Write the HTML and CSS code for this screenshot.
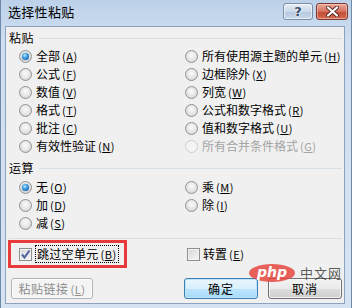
FILE: index.html
```html
<!DOCTYPE html>
<html lang="zh-CN">
<head>
  <meta charset="UTF-8" />
  <title>选择性粘贴</title>
  <link rel="stylesheet" href="styles.css">
</head>
<body>

  <div class="window">
    <div class="titlebar">
      <span class="title">选择性粘贴</span>
      <div class="caption">
        <button class="cap help">?</button>
        <button class="cap close">
          <svg width="13" height="11" viewBox="0 0 13 11">
            <path d="M2 1.5 L11 9.5 M11 1.5 L2 9.5" stroke="#5a2a22" stroke-width="4" stroke-linecap="round"/>
            <path d="M2 1.5 L11 9.5 M11 1.5 L2 9.5" stroke="#fff" stroke-width="2.2" stroke-linecap="round"/>
          </svg>
        </button>
      </div>
    </div>

    <div class="client">
      <div class="group-head">粘贴</div>
      <div class="options">
        <label class="opt"><i class="radio checked"></i>全部<span class="key">(<u>A</u>)</span></label>
        <label class="opt"><i class="radio"></i>所有使用源主题的单元<span class="key">(<u>H</u>)</span></label>
        <label class="opt"><i class="radio"></i>公式<span class="key">(<u>F</u>)</span></label>
        <label class="opt"><i class="radio"></i>边框除外<span class="key">(<u>X</u>)</span></label>
        <label class="opt"><i class="radio"></i>数值<span class="key">(<u>V</u>)</span></label>
        <label class="opt"><i class="radio"></i>列宽<span class="key">(<u>W</u>)</span></label>
        <label class="opt"><i class="radio"></i>格式<span class="key">(<u>T</u>)</span></label>
        <label class="opt"><i class="radio"></i>公式和数字格式<span class="key">(<u>R</u>)</span></label>
        <label class="opt"><i class="radio"></i>批注<span class="key">(<u>C</u>)</span></label>
        <label class="opt"><i class="radio"></i>值和数字格式<span class="key">(<u>U</u>)</span></label>
        <label class="opt"><i class="radio"></i>有效性验证<span class="key">(<u>N</u>)</span></label>
        <label class="opt disabled"><i class="radio"></i>所有合并条件格式<span class="key">(<u>G</u>)</span></label>
      </div>

      <div class="group-head op-head">运算</div>
      <div class="options op-options">
        <label class="opt"><i class="radio checked"></i>无<span class="key">(<u>O</u>)</span></label>
        <label class="opt"><i class="radio"></i>乘<span class="key">(<u>M</u>)</span></label>
        <label class="opt"><i class="radio"></i>加<span class="key">(<u>D</u>)</span></label>
        <label class="opt"><i class="radio"></i>除<span class="key">(<u>I</u>)</span></label>
        <label class="opt"><i class="radio"></i>减<span class="key">(<u>S</u>)</span></label>
      </div>

      <div class="sep"></div>

      <div class="checks">
        <div class="highlight">
          <label class="opt">
            <i class="check checked">
              <svg width="11" height="11" viewBox="0 0 11 11">
                <path d="M2 5.5 L4.5 8.5 L9.5 1.5" fill="none" stroke="#4f63a0" stroke-width="2"/>
              </svg>
            </i>
            <span class="focus">跳过空单元<span class="key">(<u>B</u>)</span></span>
          </label>
        </div>
        <label class="opt transpose"><i class="check"></i>转置<span class="key">(<u>E</u>)</span></label>
      </div>

      <div class="buttons">
        <button class="btn" disabled>粘贴链接<span class="key">(<u>L</u>)</span></button>
        <button class="btn default">确定</button>
        <button class="btn">取消</button>
      </div>
    </div>

    <div class="watermark">
      <span class="php">php</span>
      <span class="cn">中文网</span>
    </div>
  </div>

</body>
</html>
```

FILE: styles.css
```css
body {
  margin: 0;
  font-family: "Noto Sans CJK SC", "DejaVu Sans", sans-serif;
  font-size: 12px;
  color: #000;
  background: #d0dff0;
}
.window {
  position: relative;
  width: 352px;
  height: 308px;
  box-sizing: border-box;
  padding: 0 6px 4px 4px;
  background: linear-gradient(#bcd1e9, #cfdef0 40px, #d6e3f2);
  border-left: 1px solid #6f89a8;
  border-right: 1px solid #6f89a8;
  display: flex;
  flex-direction: column;
}
.titlebar {
  height: 26px;
  display: flex;
  align-items: flex-start;
  justify-content: space-between;
  margin-left: -1px;
}
.title {
  font-size: 13px;
  line-height: 24px;
  padding-left: 4px;
  letter-spacing: 0.3px;
}
.caption {
  display: flex;
  gap: 3px;
  padding-top: 3px;
  margin-right: -3px;
}
.cap {
  height: 17px;
  padding: 0;
  border-radius: 3px;
  display: flex;
  align-items: center;
  justify-content: center;
  box-sizing: border-box;
}
.help {
  width: 30px;
  border: 1px solid #7b8ea6;
  background: linear-gradient(#e7eef7, #c9d8ea 50%, #b4c8e0 51%, #c8d9ec);
  box-shadow: inset 0 0 0 1px rgba(255, 255, 255, 0.6);
  font: bold 13px "DejaVu Sans", sans-serif;
  color: #394c66;
  text-shadow: 0 0 2px #fff, 0 0 1px #fff;
}
.close {
  width: 32px;
  border: 1px solid #7b3a2f;
  background: linear-gradient(#e9a99c, #d5715f 50%, #c24a35 51%, #d36c51);
  box-shadow: inset 0 0 0 1px rgba(255, 220, 210, 0.5);
}
.client {
  flex: 1;
  background: #f0f0f0;
  border: 1px solid #8da2bd;
  padding: 0 1px 0 0;
  display: flex;
  flex-direction: column;
}
.group-head {
  display: flex;
  align-items: center;
  gap: 5px;
  height: 18px;
  margin-top: 2px;
  padding-left: 3px;
  padding-right: 1px;
  letter-spacing: 0.5px;
  line-height: 18px;
}
.group-head::after {
  content: "";
  flex: 1;
  height: 1px;
  background: #d5dfe5;
}
.op-head {
  margin-top: 4px;
}
.options {
  display: grid;
  grid-template-columns: 166px 1fr;
  grid-auto-rows: 18px;
  padding-left: 13px;
}
.op-options {
  margin-top: 1px;
}
.opt {
  display: flex;
  align-items: center;
  line-height: 18px;
  white-space: nowrap;
}
.key {
  margin-left: 2px;
  font-size: 11px;
  letter-spacing: 0.5px;
}
.key u {
  text-underline-offset: 1px;
}
.radio {
  position: relative;
  width: 13px;
  height: 13px;
  box-sizing: border-box;
  border-radius: 50%;
  border: 1px solid #929292;
  background: radial-gradient(circle at 50% 40%, #fbfbfb, #e4e4e4 55%, #cbcbcb);
  margin-right: 4px;
  flex: none;
}
.radio.checked::after {
  content: "";
  position: absolute;
  top: 2px;
  left: 2px;
  width: 7px;
  height: 7px;
  border-radius: 50%;
  background: radial-gradient(circle at 40% 35%, #b9ebff 0, #3d9be0 40%, #124f8e 100%);
  box-shadow: 0 0 1px #1f5c99;
}
.opt.disabled {
  color: #a4a4a4;
}
.opt.disabled .radio {
  border-color: #cdcdcd;
  background: #f4f4f4;
}
.sep {
  height: 1px;
  background: #d5dfe5;
  margin: 6px 1px 0 3px;
}
.checks {
  display: flex;
  align-items: center;
  margin-top: 1px;
}
.highlight {
  width: 119px;
  height: 28px;
  box-sizing: border-box;
  margin-left: 2px;
  border: 3px solid #e8393b;
  padding-left: 8px;
  display: flex;
  align-items: center;
}
.check {
  width: 13px;
  height: 13px;
  box-sizing: border-box;
  border: 1px solid #8f8f8f;
  background: linear-gradient(135deg, #d6d6d6, #f7f7f7);
  box-shadow: inset 0 0 0 1px #f2f2f2;
  margin-right: 3px;
  display: flex;
  align-items: center;
  justify-content: center;
  flex: none;
}
.focus {
  border: 1px dotted #000;
  line-height: 15px;
  padding: 0 1px;
  letter-spacing: 0.3px;
}
.transpose {
  margin-left: 60px;
}
.buttons {
  display: flex;
  gap: 10px;
  margin-top: 10px;
  padding: 0 1px 0 5px;
}
.btn {
  height: 21px;
  width: 74px;
  padding: 0;
  font-family: "Noto Sans CJK SC", sans-serif;
  font-size: 12px;
  line-height: 19px;
  color: #000;
  border: 1px solid #707070;
  border-radius: 3px;
  background: linear-gradient(#f2f2f2, #ebebeb 50%, #dddddd 51%, #cfcfcf);
  box-shadow: inset 0 0 0 1px rgba(255, 255, 255, 0.7);
  letter-spacing: 1px;
}
.btn[disabled] {
  width: 82px;
  margin-right: auto;
  color: #8d8d8d;
  border-color: #adb2b5;
  background: #f4f4f4;
  letter-spacing: 0.5px;
}
.btn.default {
  border-color: #3c7fb1;
  box-shadow: inset 0 0 0 1px #bde4fa;
  background: linear-gradient(#eaf6fd, #d9f0fc 50%, #bee6fd 51%, #a7d9f5);
}
.watermark {
  position: absolute;
  left: 248px;
  top: 264px;
  display: flex;
  align-items: center;
  gap: 5px;
  pointer-events: none;
}
.php {
  width: 46px;
  height: 18px;
  border-radius: 50%;
  background: rgba(230, 70, 64, 0.85);
  color: #fff;
  font: italic bold 14px "DejaVu Sans", sans-serif;
  line-height: 17px;
  text-align: center;
}
.cn {
  font-size: 13px;
  line-height: 16px;
  color: rgba(40, 40, 40, 0.75);
  letter-spacing: 1px;
}
```
